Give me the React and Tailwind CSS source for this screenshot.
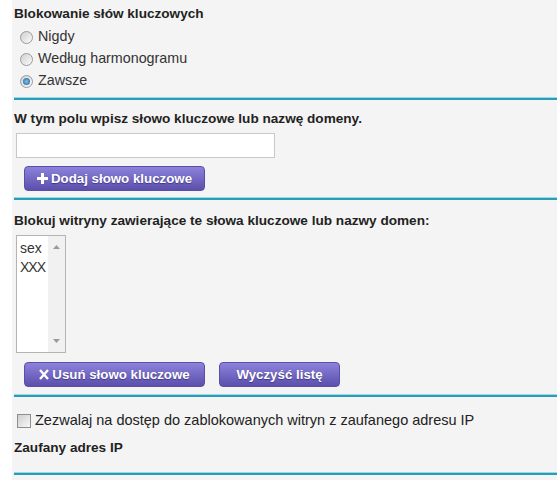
import React from "react";

const Radio = ({ checked }) => (
  <span className="relative w-[13px] h-[13px] rounded-full border border-[#9a9a9a] bg-linear-to-br from-[#d0d0d0] to-[#fbfbfb] flex items-center justify-center shrink-0">
    {checked && (
      <span className="w-[7px] h-[7px] rounded-full bg-radial from-[#7cc4ee] to-[#1f5f95]" />
    )}
  </span>
);

const Line = ({ className = "" }) => (
  <div className={"h-[3px] bg-[#2c9bb5] border-t border-[#95dbe8] " + className} />
);

const Button = ({ icon, children, className = "" }) => (
  <button
    className={
      "h-[25px] rounded-[4px] border border-[#5a4ea6] bg-linear-to-b from-[#8d82db] to-[#5b4fac] text-white font-bold text-[13.3px] flex items-center justify-center gap-[3px] [text-shadow:0_1px_1px_rgba(40,30,90,0.6)] " +
      className
    }
  >
    {icon}
    {children}
  </button>
);

const PlusIcon = () => (
  <svg width="11" height="11" viewBox="0 0 11 11">
    <path d="M4 0h3v4h4v3H7v4H4V7H0V4h4z" fill="#fff" />
  </svg>
);

const XIcon = () => (
  <svg width="10" height="11" viewBox="0 0 10 11">
    <path d="M1 1l8 9M9 1l-8 9" stroke="#fff" strokeWidth="2.4" />
  </svg>
);

export default function App() {
  return (
    <div className="w-[557px] h-[480px] bg-white flex font-['Liberation_Sans',Arial,sans-serif] text-[#222] overflow-hidden">
      <div className="ml-[12px] flex-1 bg-[#f4f4f4] flex flex-col">
        <div className="pl-[2px] pt-[6px] text-[13.6px] leading-[16px] font-bold">
          Blokowanie słów kluczowych
        </div>
        <div className="mt-[4px] pl-[8px] flex flex-col text-[14.3px] text-[#333]">
          {[
            ["Nigdy", false],
            ["Według harmonogramu", false],
            ["Zawsze", true],
          ].map(([label, checked]) => (
            <label key={label} className="h-[22px] flex items-center gap-[5px]">
              <Radio checked={checked} />
              <span>{label}</span>
            </label>
          ))}
        </div>
        <Line className="mt-[5px] ml-[2px]" />

        <div className="mt-[11px] pl-[2px] text-[13.6px] leading-[16px] font-bold">
          W tym polu wpisz słowo kluczowe lub nazwę domeny.
        </div>
        <input
          type="text"
          className="mt-[6px] ml-[4px] w-[259px] h-[25px] bg-white border border-[#c8c8c8] outline-none"
        />
        <Button icon={<PlusIcon />} className="mt-[8px] ml-[12px] w-[181px]">
          Dodaj słowo kluczowe
        </Button>
        <Line className="mt-[6px] ml-[2px]" />

        <div className="mt-[13px] pl-[2px] text-[13.6px] leading-[16px] font-bold">
          Blokuj witryny zawierające te słowa kluczowe lub nazwy domen:
        </div>
        <div className="mt-[6px] ml-[4px] w-[50px] h-[118px] bg-white border border-[#b4b4b4] flex">
          <div className="flex-1 pl-[3px] pt-[3px] text-[14px] leading-[19px] text-[#333]">
            <div>sex</div>
            <div className="tracking-[-1px]">XXX</div>
          </div>
          <div className="w-[17px] bg-[#f1f1f1] flex flex-col items-center justify-between py-[9px]">
            <svg width="7" height="4" viewBox="0 0 7 4">
              <path d="M0 4L3.5 0 7 4z" fill="#9a9a9a" />
            </svg>
            <svg width="7" height="4" viewBox="0 0 7 4">
              <path d="M0 0h7L3.5 4z" fill="#9a9a9a" />
            </svg>
          </div>
        </div>
        <div className="mt-[9px] ml-[12px] flex gap-[14px]">
          <Button icon={<XIcon />} className="w-[181px]">
            Usuń słowo kluczowe
          </Button>
          <Button className="w-[121px]">Wyczyść listę</Button>
        </div>
        <Line className="mt-[7px] ml-[2px]" />

        <label className="mt-[15px] ml-[5px] h-[18px] flex items-center gap-[4px] text-[14.5px]">
          <span className="w-[14px] h-[14px] border border-[#8e8e8e] bg-linear-to-br from-[#cfcfcf] to-[#f7f7f7] shrink-0" />
          <span>Zezwalaj na dostęp do zablokowanych witryn z zaufanego adresu IP</span>
        </label>
        <div className="mt-[10px] pl-[2px] text-[13.6px] leading-[16px] font-bold">
          Zaufany adres IP
        </div>
        <Line className="mt-[16px] ml-[2px]" />
      </div>
    </div>
  );
}
